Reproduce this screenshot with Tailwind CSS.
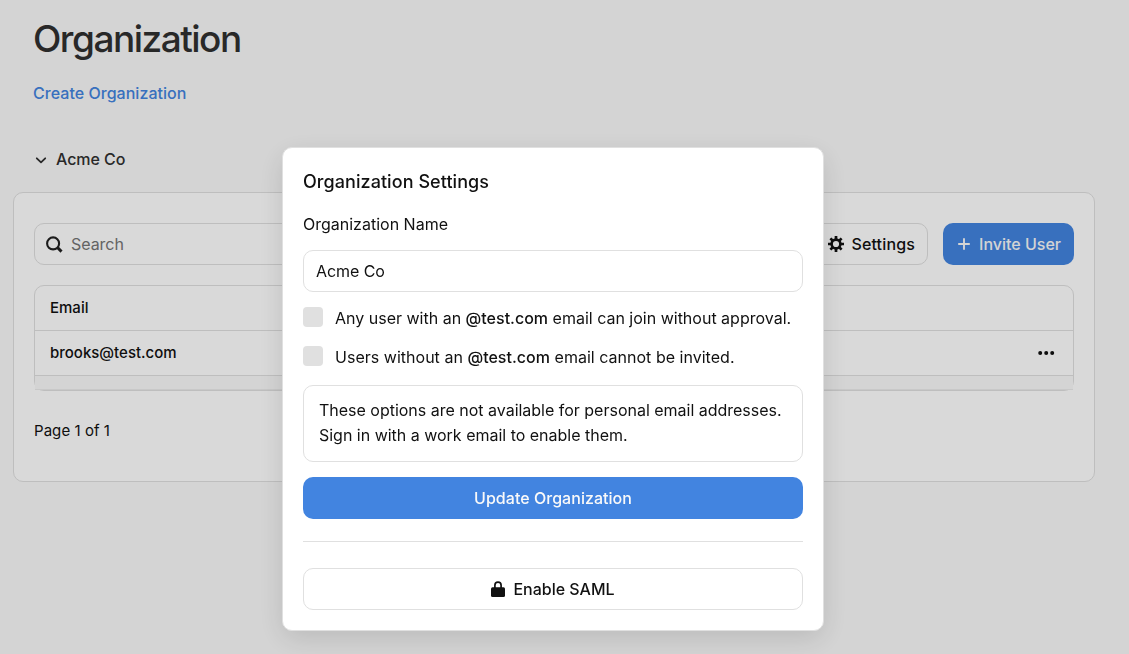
<!DOCTYPE html>
<html lang="en">
<head>
<meta charset="utf-8">
<title>Organization</title>
<script src="https://cdn.jsdelivr.net/npm/@tailwindcss/browser@4"></script>
</head>
<body class="h-screen overflow-hidden bg-[#f9f9f9] font-['Inter',sans-serif] text-base text-[#111]">
<main class="pl-[13px] pr-[34px] pt-4">
  <div class="pl-5">
    <h1 class="text-[37px] leading-[46px] font-medium tracking-[-1.5px] text-[#303030]">Organization</h1>
    <a class="mt-[19px] block leading-6 font-medium tracking-[0.03px] text-[#4284e0]">Create Organization</a>
    <div class="mt-[42px] flex h-6 items-center gap-2 font-medium tracking-[-0.05px] text-[#303030]">
      <svg class="size-[15px]" viewBox="0 0 15 15" fill="none" stroke="currentColor" stroke-width="1.8" stroke-linecap="round" stroke-linejoin="round"><path d="M3.800 6.300 8 10.300 12.200 6.300"/></svg>
      Acme Co
    </div>
  </div>
  <section class="mt-[21px] h-[290px] rounded-[10px] border border-[#e0e0e0] bg-white px-5 pt-[30px]">
    <div class="flex h-[42px] gap-[15px]">
      <div class="flex flex-1 items-center gap-2 rounded-[10px] border border-[#e0e0e0] px-[11px] tracking-[-0.05px] text-[#757575]">
        <svg class="size-[17px] text-[#222]" viewBox="0 0 17 17" fill="none" stroke="currentColor" stroke-width="2.100"><circle cx="7.100" cy="7.400" r="6"/><path d="m11.500 11.500 4 4.100" stroke-width="3"/></svg>
        Search
      </div>
      <button class="flex w-[114px] items-center justify-end gap-[7px] rounded-[10px] border border-[#e0e0e0] pr-3 font-medium tracking-[0.15px]">
        <svg class="size-4" viewBox="0 0 16 16"><g fill="none" stroke="currentColor"><circle cx="8" cy="8" r="4.400" stroke-width="2.600"/><path stroke-width="2.700" d="M8 0v3.500M8 12.500V16M0 8h3.500M12.500 8H16M2.400 2.400l2.400 2.400M11.200 11.200l2.400 2.400M13.600 2.400l-2.400 2.400M4.800 11.200l-2.400 2.400"/></g></svg>
        Settings
      </button>
      <button class="flex w-[131px] items-center justify-end gap-2 rounded-[10px] bg-[#4284e0] pr-[13px] font-medium text-[#f9f9f9]">
        <svg class="size-[14px]" viewBox="0 0 14 14" stroke="currentColor" stroke-width="1.900"><path d="M7 1.200v11.600M1.200 7h11.600"/></svg>
        Invite User
      </button>
    </div>
    <div class="mt-5 h-[106px] rounded-[10px] border border-[#e0e0e0] text-[15px] font-medium">
      <div class="flex h-[45px] items-center border-b border-[#e0e0e0] px-[15px]">Email</div>
      <div class="flex h-[45px] items-center justify-between border-b border-[#e0e0e0] px-[15px]">brooks@test.com
        <svg class="mr-[3px] h-4 w-[17px]" viewBox="0 0 17 16" fill="currentColor"><circle cx="2.200" cy="8" r="2"/><circle cx="8.200" cy="8" r="2"/><circle cx="14.200" cy="8" r="2"/></svg>
      </div>
      <div class="h-[14px] border-b border-[#ebebeb] bg-[#f9f9f9]"></div>
    </div>
    <p class="mt-7 text-[15px] leading-6 tracking-[0.06px]">Page 1 of 1</p>
  </section>
</main>
<div class="fixed inset-0 bg-black/15"></div>
<div role="dialog" class="fixed left-[282px] top-[147px] h-[484px] w-[542px] rounded-[10px] border border-[#e0e0e0] bg-white px-5 pt-[21px] shadow-[0_8px_28px_rgba(0,0,0,0.12)]">
  <h2 class="text-lg leading-[26px] font-medium tracking-[0.06px]">Organization Settings</h2>
  <label class="mt-[17px] block leading-6">Organization Name</label>
  <div class="mt-[14px] flex h-[42px] items-center rounded-[10px] border border-[#e0e0e0] px-3 tracking-[-0.06px]">Acme Co</div>
  <div class="mt-[15px] flex h-6 items-start gap-3 leading-[22px]"><span class="size-5 rounded-[4px] bg-[#e0e0e0]"></span><span>Any user with an <span class="font-medium">@test.com</span> email can join without approval.</span></div>
  <div class="mt-[15px] flex h-6 items-start gap-3 leading-[22px] tracking-[0.02px]"><span class="size-5 rounded-[4px] bg-[#e0e0e0]"></span><span>Users without an <span class="font-medium">@test.com</span> email cannot be invited.</span></div>
  <div class="mt-[15px] h-[77px] rounded-[10px] border border-[#e0e0e0] px-[15px] pt-3 leading-[25px] tracking-[-0.01px]">These options are not available for personal email addresses.<br>Sign in with a work email to enable them.</div>
  <button class="mt-[15px] block h-[42px] w-full rounded-[10px] bg-[#4284e0] font-medium tracking-[0.03px] text-[#f9f9f9]">Update Organization</button>
  <div class="mt-[22px] border-t border-[#e0e0e0]"></div>
  <button class="mt-[26px] flex h-[42px] w-full items-center justify-center gap-2 rounded-[10px] border border-[#e0e0e0] font-medium">
    <svg class="h-4 w-[14px]" viewBox="0 0 14 16" fill="none"><rect y="6.200" width="14" height="9.800" rx="1.500" fill="currentColor"/><path d="M3.900 8V4.200a3.100 3.100 0 0 1 6.200 0V8" stroke="currentColor" stroke-width="1.700"/></svg>
    Enable SAML
  </button>
</div>
</body>
</html>
